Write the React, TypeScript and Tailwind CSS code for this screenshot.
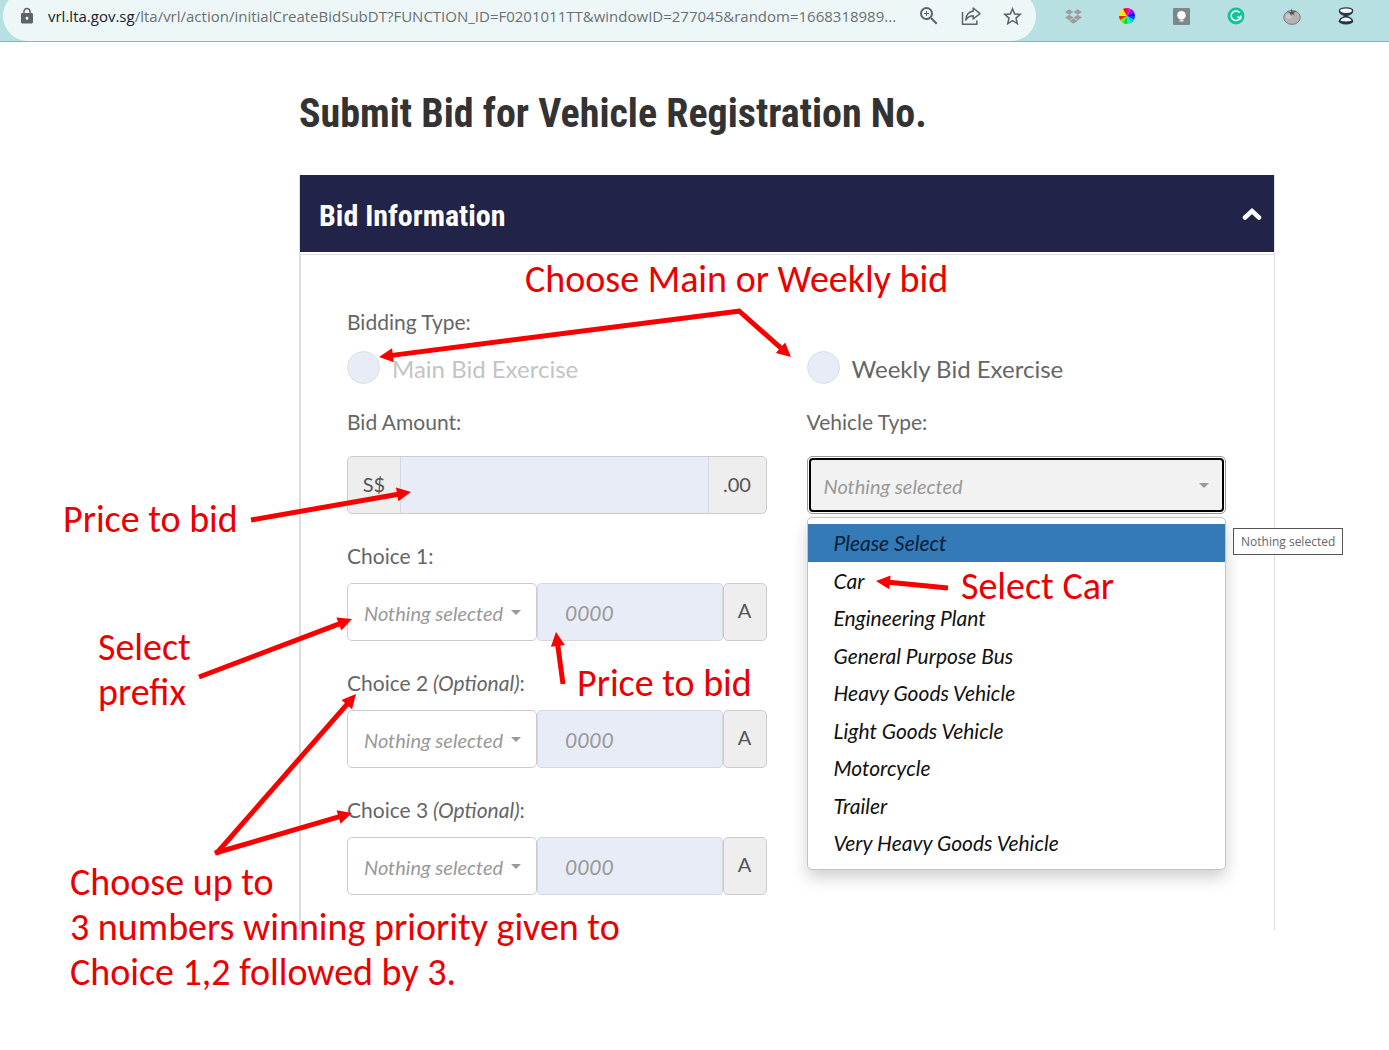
import React, { useState } from 'react';
import { FaDropbox } from 'react-icons/fa';
import { MdLock, MdStarBorder, MdZoomIn } from 'react-icons/md';

const vehicleTypes = [
  'Please Select',
  'Car',
  'Engineering Plant',
  'General Purpose Bus',
  'Heavy Goods Vehicle',
  'Light Goods Vehicle',
  'Motorcycle',
  'Trailer',
  'Very Heavy Goods Vehicle',
];

const wheelColors = [
  '#ff00c8', '#a000ff', '#2a00ff', '#0048ff', '#00c8ff', '#00ffb0',
  '#00e020', '#60ff00', '#ff2000', '#e8f000', '#ffe600', '#ff0030',
];

function ColorWheel() {
  const point = (i: number) => {
    const a = ((i * 30 - 90) * Math.PI) / 180;
    return `${8 + 8 * Math.cos(a)} ${8 + 8 * Math.sin(a)}`;
  };
  return (
    <svg viewBox="0 0 16 16" className="w-4 h-4">
      {wheelColors.map((color, i) => (
        <path key={color} d={`M8 8L${point(i)}A8 8 0 0 1 ${point(i + 1)}Z`} fill={color} />
      ))}
    </svg>
  );
}

function ShareIcon() {
  return (
    <svg viewBox="0 0 20 20" className="w-5 h-5" fill="none" stroke="#5f6368" strokeWidth="1.5">
      <path d="M1.5 6V18.2H15.8V14.5" />
      <path d="M12.2 2L19 7.6L12.2 13V9.8C8.6 9.8 6.4 11.3 4.8 14C5.2 9 8 5.6 12.2 5.2Z" strokeLinejoin="round" />
    </svg>
  );
}

function BulbIcon() {
  return (
    <svg viewBox="0 0 17 17" className="w-[17px] h-[17px]">
      <rect width="17" height="17" rx="1" fill="#7f868c" />
      <circle cx="8.5" cy="7.2" r="4.3" fill="#fff" />
      <path d="M6.5 10H10.5V11.3H6.5ZM6.5 12.2H10.5V13.4H6.5Z" fill="#fff" />
    </svg>
  );
}

function GrammarIcon() {
  return (
    <svg viewBox="0 0 18 18" className="w-[18px] h-[18px]">
      <circle cx="9" cy="9" r="8.5" fill="#15c39a" />
      <path d="M12.6 5.6A4.8 4.8 0 1 0 13.5 10.2H10" fill="none" stroke="#fff" strokeWidth="1.5" />
      <path d="M13.8 8.6V12.4" stroke="#fff" strokeWidth="1.2" />
    </svg>
  );
}

function TomatoIcon() {
  return (
    <svg viewBox="0 0 18 18" className="w-[18px] h-[18px]">
      <ellipse cx="9" cy="10.4" rx="8.3" ry="7" fill="#b3b3b3" stroke="#7b7b7b" />
      <ellipse cx="6" cy="9.5" rx="3" ry="2.4" fill="#c9c9c9" />
      <path d="M4 4.5L8 5L8.2 1.2L9.4 4.6L13.6 4L10.6 6.2L11.5 8.4L8.9 7L8 9.4L7.2 6.6Z" fill="#555" />
    </svg>
  );
}

function HourglassIcon() {
  return (
    <svg viewBox="0 0 16 18" className="w-4 h-[18px]">
      <path d="M1 14.2C1.3 11 4.5 9.8 6.6 9C4.5 8.2 1.3 7.2 1 4.2H15C14.7 7.2 11.5 8.2 9.4 9C11.5 9.8 14.7 11 15 14.2Z" fill="#24364f" />
      <ellipse cx="8" cy="3.8" rx="6.6" ry="2.9" fill="#fff" stroke="#24364f" strokeWidth="1.4" />
      <ellipse cx="8" cy="14.2" rx="7.2" ry="3.3" fill="#24364f" />
      <path d="M2.4 13.6C3.5 11 6 10.6 8 10.4C10 10.6 12.5 11 13.6 13.6C10.5 14.8 5.5 14.8 2.4 13.6Z" fill="#fff" />
    </svg>
  );
}

function Caret({ className }: { className: string }) {
  return (
    <svg viewBox="0 0 10 5" className={`w-[10px] h-[5px] pointer-events-none absolute ${className}`}>
      <path d="M0 0H10L5 5Z" fill="#999" />
    </svg>
  );
}

function BrowserBar() {
  return (
    <div className="flex items-center h-[42px] bg-[#b8e0e3] border-b border-[#8fb3b5] overflow-hidden">
      <div className="flex-1 min-w-0 flex items-center h-[50px] -mt-[9px] ml-[3px] pl-[15px] pr-3 rounded-full bg-[#edf7f8] text-[#5f6368]">
        <MdLock className="w-[18px] h-[18px] shrink-0" />
        <div className="flex-1 min-w-0 ml-3 text-[15px] leading-5 whitespace-nowrap overflow-hidden font-['Open_Sans','Noto_Sans',sans-serif] text-[#6b7073]">
          <span className="text-[#202124]">vrl.lta.gov.sg</span>
          /lta/vrl/action/initialCreateBidSubDT?FUNCTION_ID=F0201011TT&amp;windowID=277045&amp;random=1668318989...
        </div>
        <div className="flex items-center gap-5">
          <button type="button" aria-label="Zoom"><MdZoomIn className="w-6 h-6" /></button>
          <button type="button" aria-label="Share"><ShareIcon /></button>
          <button type="button" aria-label="Bookmark"><MdStarBorder className="w-[23px] h-[23px]" /></button>
        </div>
      </div>
      <div className="flex items-center justify-between w-[289px] h-[50px] -mt-[9px] ml-[29px] mr-[35px]">
        <FaDropbox className="w-[17px] h-[17px] text-[#9b9ea0]" />
        <ColorWheel />
        <BulbIcon />
        <GrammarIcon />
        <TomatoIcon />
        <HourglassIcon />
      </div>
    </div>
  );
}

function BidRadio({ label, disabled }: { label: string; disabled?: boolean }) {
  return (
    <label className={`flex items-center gap-3 h-[34px] text-2xl leading-8 ${disabled ? 'text-[#c4c4c4]' : 'text-[#666]'}`}>
      <input
        type="radio"
        name="biddingType"
        disabled={disabled}
        className="appearance-none shrink-0 w-[33px] h-[33px] rounded-full bg-[#e8ecf6] border border-[#dcdfe6] checked:bg-[#337ab7]"
      />
      <span className="pt-1">{label}</span>
    </label>
  );
}

function ChoiceRow({ index }: { index: number }) {
  const id = `choice${index}`;
  return (
    <div>
      <label htmlFor={id} className="block h-[30px] leading-[30px]">
        Choice {index}
        {index > 1 && <i> (Optional)</i>}:
      </label>
      <div className="flex h-[58px] mt-3">
        <div className="relative w-[190px]">
          <select
            aria-label={`Choice ${index} prefix`}
            className="appearance-none w-full h-full pl-4 pt-0.5 rounded-[5px] border border-[#ccc] bg-white text-xl italic text-[#999]"
          >
            <option>Nothing selected</option>
          </select>
          <Caret className="right-4 top-[27px]" />
        </div>
        <input
          id={id}
          placeholder="0000"
          className="flex-1 min-w-0 px-[27px] pt-0.5 rounded-[4px] border border-[#d5d8de] bg-[#e8ecf6] italic placeholder:text-[#999]"
        />
        <span className="flex items-center justify-center w-11 pb-1 rounded-[5px] border border-[#ccc] bg-[#eee] text-[#555] text-xl">A</span>
      </div>
    </div>
  );
}

function VehicleTypeSelect() {
  const [selected, setSelected] = useState(0);
  return (
    <div>
      <label htmlFor="vehicleType" className="block h-[30px] leading-[30px]">Vehicle Type:</label>
      <div className="relative mt-[19px]">
        <div className="relative h-[58px] p-px rounded-[5px] border border-[#999] bg-white">
          <select
            id="vehicleType"
            className="appearance-none w-full h-full pl-[13px] pt-0.5 rounded-[4px] border-2 border-black bg-[#f2f2f2] text-xl italic text-[#999] outline-none"
          >
            <option>Nothing selected</option>
          </select>
          <Caret className="right-4 top-[26px]" />
        </div>
        <ul
          role="listbox"
          aria-label="Vehicle types"
          className="absolute z-10 top-[61px] inset-x-0 grid auto-rows-fr h-[353px] pt-[6px] pb-[7px] rounded-[5px] border border-[#c4c4c4] bg-white shadow-[0_8px_16px_rgba(0,0,0,0.18)]"
        >
          {vehicleTypes.map((type, i) => (
            <li key={type} role="option" aria-selected={i === selected}>
              <button
                type="button"
                onClick={() => setSelected(i)}
                className={`block w-full h-full px-[26px] text-left italic ${i === selected ? 'bg-[#337ab7] text-[#06203a]' : 'text-[#111]'}`}
              >
                {type}
              </button>
            </li>
          ))}
        </ul>
        <div
          role="tooltip"
          className="absolute z-20 left-full top-[72px] ml-[7px] px-[7px] h-[27px] leading-[25px] border border-[#555] bg-white text-xs whitespace-nowrap font-['Open_Sans','Noto_Sans',sans-serif]"
        >
          Nothing selected
        </div>
      </div>
    </div>
  );
}

function Arrow({ from, to }: { from: [number, number]; to: [number, number] }) {
  const [x1, y1] = from;
  const [x2, y2] = to;
  const length = Math.hypot(x2 - x1, y2 - y1);
  const ux = (x2 - x1) / length;
  const uy = (y2 - y1) / length;
  const bx = x2 - ux * 14;
  const by = y2 - uy * 14;
  return (
    <g>
      <line x1={x1} y1={y1} x2={bx + ux} y2={by + uy} stroke="#f80000" strokeWidth="5" />
      <polygon
        points={`${x2},${y2} ${bx - uy * 7},${by + ux * 7} ${bx + uy * 7},${by - ux * 7}`}
        fill="#f80000"
      />
    </g>
  );
}

function Annotations() {
  return (
    <div className="absolute inset-0 z-30 pointer-events-none text-[#ea0000] text-[38px] leading-[45px] whitespace-nowrap font-['Carlito','Lato',sans-serif]">
      <svg width="1389" height="1050" className="absolute left-0 top-0">
        <Arrow from={[740, 311]} to={[379, 357]} />
        <Arrow from={[738, 310]} to={[791, 357]} />
        <Arrow from={[251, 520]} to={[411, 492]} />
        <Arrow from={[199, 677]} to={[352, 619]} />
        <Arrow from={[563, 684]} to={[556, 632]} />
        <Arrow from={[948, 588]} to={[876, 581]} />
        <Arrow from={[216, 854]} to={[356, 694]} />
        <Arrow from={[215, 853]} to={[352, 813]} />
      </svg>
      <p className="absolute left-[525px] top-[257px]">Choose Main or Weekly bid</p>
      <p className="absolute left-[63px] top-[497px]">Price to bid</p>
      <p className="absolute left-[98px] top-[625px]">Select<br />prefix</p>
      <p className="absolute left-[577px] top-[661px]">Price to bid</p>
      <p className="absolute left-[961px] top-[564px]">Select Car</p>
      <p className="absolute left-[70px] top-[860px]">
        Choose up to<br />
        3 numbers winning priority given to<br />
        Choice 1,2 followed by 3.
      </p>
    </div>
  );
}

export default function App() {
  return (
    <div className="relative min-h-screen bg-white overflow-hidden">
      <BrowserBar />
      <main className="pl-[299px] pr-[114px] pt-[46px] text-[21px] text-[#666] font-['Lato',sans-serif]">
        <h1 className="h-[52px] leading-[52px] text-[40px] font-bold text-[#333] whitespace-nowrap font-['Roboto_Condensed','Liberation_Sans_Narrow','Open_Sans',sans-serif]">
          Submit Bid for Vehicle Registration No.
        </h1>
        <section className="mt-[35px] border-x border-[#ddd]">
          <header className="flex items-center justify-between h-[77px] pl-[19px] pr-3 bg-[#222349] text-white">
            <h2 className="pt-1 text-[30px] font-bold font-['Roboto_Condensed','Liberation_Sans_Narrow','Open_Sans',sans-serif]">Bid Information</h2>
            <button type="button" aria-label="Collapse">
              <svg viewBox="0 0 20 14" className="w-5 h-[14px]">
                <path d="M3 10.5L10 4L17 10.5" fill="none" stroke="#fff" strokeWidth="4.5" strokeLinecap="round" />
              </svg>
            </button>
          </header>
          <form className="mt-[2px] border-t border-l border-[#ddd] pt-[52px] pb-[35px] pl-[46px] pr-12">
            <div role="radiogroup" aria-labelledby="biddingType">
              <div id="biddingType" className="h-[30px] leading-[30px]">Bidding Type:</div>
              <div className="grid grid-cols-2 gap-10 mt-[13px]">
                <BidRadio label="Main Bid Exercise" disabled />
                <BidRadio label="Weekly Bid Exercise" />
              </div>
            </div>
            <div className="grid grid-cols-2 gap-10 mt-[23px]">
              <div className="flex flex-col gap-[27px]">
                <div>
                  <label htmlFor="bidAmount" className="block h-[30px] leading-[30px]">Bid Amount:</label>
                  <div className="flex h-[58px] mt-[19px] rounded-[5px] border border-[#ccc] bg-[#eee] text-xl text-[#555] overflow-hidden">
                    <span className="flex items-center justify-center w-[52px] pb-0.5">S$</span>
                    <input id="bidAmount" className="flex-1 min-w-0 px-6 border-x border-[#d5d8de] bg-[#e8ecf6]" />
                    <span className="flex items-center justify-center w-[57px] pb-0.5">.00</span>
                  </div>
                </div>
                <ChoiceRow index={1} />
                <ChoiceRow index={2} />
                <ChoiceRow index={3} />
              </div>
              <VehicleTypeSelect />
            </div>
          </form>
        </section>
      </main>
      <Annotations />
    </div>
  );
}
